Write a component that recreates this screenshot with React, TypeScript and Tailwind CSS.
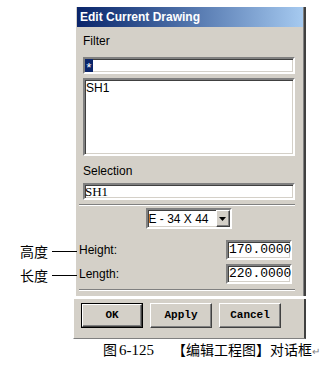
import type { ReactNode } from 'react'

// Win2k-style bevels
const sunken = 'border-2 border-t-[#808080] border-l-[#808080] border-b-white border-r-white bg-white '
	+ 'shadow-[inset_1px_1px_0_#404040,inset_-1px_-1px_0_#d4d0c8]'
const raised = 'border border-t-white border-l-white border-b-[#404040] border-r-[#404040] bg-[#d4d0c8] '
	+ 'shadow-[inset_-1px_-1px_0_#808080]'

const Separator = () => (
	<div className="-ml-[4px] w-[216px] border-t border-b border-t-[#808080] border-b-white" />
)

const DlgButton = ({ children, isDefault }: { children: ReactNode, isDefault?: boolean }) => (
	<div className={isDefault ? 'h-[25px] w-[62px] border border-black' : 'h-[25px] w-[62px]'}>
		<div className={`${raised} flex h-full w-full items-center justify-center font-['Liberation_Mono',monospace] text-[11px] font-bold text-black`}>
			{children}
		</div>
	</div>
)

const NumberRow = ({ label, value, className }: { label: string, value: string, className?: string }) => (
	<div className={`-ml-[4px] flex h-[20px] items-center justify-between pr-[2px] ${className ?? ''}`}>
		<span className="text-[12px] leading-[14px] text-black">{label}</span>
		<div className={`${sunken} flex h-[20px] w-[66px] items-center pl-[1px] font-['Liberation_Mono',monospace] text-[13px] leading-[16px] text-black`}>
			{value}
		</div>
	</div>
)

export default function App() {
	return (
		<div className="relative h-[368px] w-[327px] overflow-hidden bg-white pt-[4px] font-['Liberation_Sans',Arial,sans-serif]">
			{/* callout annotations on the left */}
			<div className="absolute left-[20px] top-[243px] flex items-center">
				<span className="font-['Noto_Sans_CJK_SC',sans-serif] text-[14px] leading-[16px] text-black">高度</span>
				<span className="ml-[4px] h-px w-[25px] bg-black" />
			</div>
			<div className="absolute left-[20px] top-[267px] flex items-center">
				<span className="font-['Noto_Sans_CJK_SC',sans-serif] text-[14px] leading-[16px] text-black">长度</span>
				<span className="ml-[4px] h-px w-[25px] bg-black" />
			</div>

			{/* main dialog body */}
			<div className="ml-[75px] w-[231px] border-l border-r-2 border-l-white border-r-[#404040] bg-[#d4d0c8] pb-[5px] shadow-[inset_-1px_0_0_#808080]">
				<div className="mx-px mt-[3px] flex h-[20px] items-center bg-gradient-to-r from-[#0a246a] to-[#a6caf0] pl-[3px] text-[12px] font-bold text-white">
					Edit Current Drawing
				</div>
				<div className="flex flex-col pl-[7px] pr-[10px]">
					<div className="mt-[7px] text-[12px] leading-[14px] text-black">Filter</div>
					<div className={`${sunken} mt-[9px] flex h-[17px] w-[212px] items-center`}>
						<span className="h-[13px] w-[8px] bg-[#0a246a] pt-[3px] text-center font-['Liberation_Mono',monospace] text-[13px] leading-[13px] text-white">*</span>
					</div>
					<div className={`${sunken} mt-[4px] h-[78px] w-[212px] pl-px text-[12px] leading-[16px] text-black`}>
						SH1
					</div>
					<div className="mt-[8px] text-[12px] leading-[14px] text-black">Selection</div>
					<div className={`${sunken} mt-[5px] flex h-[17px] w-[212px] items-center font-['Liberation_Serif',serif] text-[13px] leading-[14px] text-black`}>
						SH1
					</div>
					<div className="mt-[4px]"><Separator /></div>
					<div className="mt-[2px] flex justify-center">
						<div className={`${sunken} flex h-[21px] w-[86px] items-center justify-between`}>
							<span className="pl-[1px] text-[12px] leading-[14px] text-black">E - 34 X 44</span>
							<div className={`${raised} flex h-full w-[14px] items-center justify-center`}>
								<svg width="7" height="4" viewBox="0 0 7 4">
									<path d="M0 0h7L3.5 4z" fill="#000" />
								</svg>
							</div>
						</div>
					</div>
					<NumberRow label="Height:" value="170.0000" className="mt-[11px]" />
					<NumberRow label="Length:" value="220.0000" className="mt-[4px]" />
					<div className="mt-[5px]"><Separator /></div>
				</div>
			</div>

			{/* button strip */}
			<div className="ml-[73px] mt-[3px] flex h-[40px] w-[233px] gap-[7px] border-l border-r-2 border-b border-l-white border-r-[#404040] border-b-[#808080] bg-[#d4d0c8] pl-[7px] pt-[4px]">
				<DlgButton isDefault>OK</DlgButton>
				<DlgButton>Apply</DlgButton>
				<DlgButton>Cancel</DlgButton>
			</div>

			{/* caption */}
			<p className="ml-[103px] mt-px flex items-baseline text-[14px] leading-[18px] text-black">
				<span className="font-['Noto_Sans_CJK_SC',sans-serif]">图</span>
				<span className="ml-[2px] font-['Liberation_Serif',serif] text-[15px]">6-125</span>
				<span className="ml-[18px] font-['Noto_Sans_CJK_SC',sans-serif]">【编辑工程图】对话框</span>
				<span className="text-[10px] text-[#808080]">↵</span>
			</p>
		</div>
	)
}
